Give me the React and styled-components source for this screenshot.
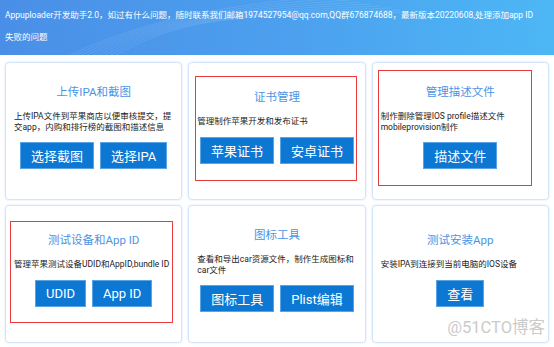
import React from 'react';
import styled, { createGlobalStyle } from 'styled-components';

const GlobalStyle = createGlobalStyle`
    body {
        margin: 0;
        background: #fff;
        font-family: Roboto, "Noto Sans CJK SC", sans-serif;
    }
`;

const Page = styled.div`
    position: relative;
    width: 554px;
    height: 347px;
    overflow: hidden;
    background: #fff;
`;

const Header = styled.div`
    position: relative;
    height: 55px;
    box-sizing: border-box;
    padding: 4px 5px 0;
    background: linear-gradient(90deg, #4a8fe7 0%, #4c9fee 50%, #4db7f5 100%);
    color: #fff;
    font-size: 8.5px;
    line-height: 22px;
    overflow: hidden;
`;

const Waves = styled.svg`
    position: absolute;
    left: 0;
    top: 0;
`;

const HeaderText = styled.div`
    position: relative;
`;

const Grid = styled.div`
    display: grid;
    grid-template-columns: repeat(3, 1fr);
    grid-template-rows: 138px 138px;
    gap: 5px 6px;
    padding: 7px 5px 0;
`;

const Card = styled.div`
    position: relative;
    display: flex;
    flex-direction: column;
    align-items: center;
    justify-content: center;
    box-sizing: border-box;
    padding: 0 8px 8px;
    border: 1px solid #d3e5f8;
    border-radius: 4px;
    box-shadow: 0 0 2px rgba(74, 144, 226, 0.25);
`;

const Title = styled.div`
    color: #4a94e4;
    font-size: 11.5px;
    line-height: 14px;
    margin-bottom: 12px;
`;

const Desc = styled.div`
    align-self: stretch;
    color: #222;
    font-size: 8.5px;
    line-height: 10.5px;
    margin-bottom: 10px;
    white-space: ${p => (p.$nowrap ? 'nowrap' : 'normal')};
`;

const Buttons = styled.div`
    display: flex;
    gap: 6px;
`;

const Button = styled.button`
    height: 27px;
    padding: 0 10px;
    border: 1px solid #5aa3e4;
    background: #0c78d4;
    color: #fff;
    font-family: inherit;
    font-size: 13px;
    cursor: pointer;
`;

const Highlight = styled.div`
    position: absolute;
    top: ${p => p.$box[0]}px;
    right: ${p => p.$box[1]}px;
    bottom: ${p => p.$box[2]}px;
    left: ${p => p.$box[3]}px;
    border: 1.5px solid #e63c3c;
    pointer-events: none;
`;

const Watermark = styled.div`
    position: absolute;
    right: 9px;
    top: 318px;
    font-size: 16.5px;
    line-height: 20px;
    color: #cbcbcb;
    pointer-events: none;
`;

const cards = [
    {
        title: '上传IPA和截图',
        desc: '上传IPA文件到苹果商店以便审核提交，提交app，内购和排行榜的截图和描述信息',
        buttons: ['选择截图', '选择IPA'],
    },
    {
        title: '证书管理',
        desc: '管理制作苹果开发和发布证书',
        buttons: ['苹果证书', '安卓证书'],
        box: [13, 8, 18, 6],
    },
    {
        title: '管理描述文件',
        desc: '制作删除管理IOS profile描述文件 mobileprovision制作',
        buttons: ['描述文件'],
        box: [7, 16, 13, 5],
    },
    {
        title: '测试设备和App ID',
        desc: '管理苹果测试设备UDID和AppID,bundle ID',
        buttons: ['UDID', 'App ID'],
        box: [15, 8, 19, 4],
        nowrap: true,
    },
    {
        title: '图标工具',
        desc: '查看和导出car资源文件，制作生成图标和car文件',
        buttons: ['图标工具', 'Plist编辑'],
    },
    {
        title: '测试安装App',
        desc: '安装IPA到连接到当前电脑的IOS设备',
        buttons: ['查看'],
    },
];

function HeaderWaves() {
    const lines = [];
    for (let i = 0; i < 9; i++) {
        lines.push(
            <path
                key={i}
                d={`M${60 + i * 6} 60 C ${120 + i * 8} ${30 - i * 2}, ${190 + i * 6} ${8 + i}, ${330 + i * 10} ${-4 + i * 2}`}
                fill="none"
                stroke="#fff"
                strokeOpacity="0.13"
                strokeWidth="0.8"
            />
        );
    }
    return (
        <Waves width="554" height="55" viewBox="0 0 554 55">
            {lines}
        </Waves>
    );
}

export default function App() {
    return (
        <Page>
            <GlobalStyle />
            <Header>
                <HeaderWaves />
                <HeaderText>
                    Appuploader开发助手2.0，如过有什么问题，随时联系我们邮箱1974527954@qq.com,QQ群676874688，最新版本20220608,处理添加app ID
                    <br />
                    失败的问题
                </HeaderText>
            </Header>
            <Grid>
                {cards.map(card => (
                    <Card key={card.title}>
                        <Title>{card.title}</Title>
                        <Desc $nowrap={card.nowrap}>{card.desc}</Desc>
                        <Buttons>
                            {card.buttons.map(b => (
                                <Button key={b}>{b}</Button>
                            ))}
                        </Buttons>
                        {card.box && <Highlight $box={card.box} />}
                    </Card>
                ))}
            </Grid>
            <Watermark>@51CTO博客</Watermark>
        </Page>
    );
}
